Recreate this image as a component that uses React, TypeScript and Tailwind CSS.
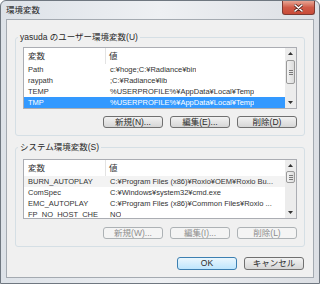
const FONT = "font-['Liberation_Sans','Noto_Sans_CJK_JP',sans-serif]";

type Row = { name: string; value: string; selected?: boolean; hover?: boolean };

const USER_VARS: Row[] = [
  { name: "Path", value: "c:¥hoge;C:¥Radiance¥bin" },
  { name: "raypath", value: ";C:¥Radiance¥lib" },
  { name: "TEMP", value: "%USERPROFILE%¥AppData¥Local¥Temp" },
  { name: "TMP", value: "%USERPROFILE%¥AppData¥Local¥Temp", selected: true },
];

const SYSTEM_VARS: Row[] = [
  { name: "BURN_AUTOPLAY", value: "C:¥Program Files (x86)¥Roxio¥OEM¥Roxio Bu...", hover: true },
  { name: "ComSpec", value: "C:¥Windows¥system32¥cmd.exe" },
  { name: "EMC_AUTOPLAY", value: "C:¥Program Files (x86)¥Common Files¥Roxio ..." },
  { name: "FP_NO_HOST_CHE", value: "NO" },
];

function Arrow({ down }: { down?: boolean }) {
  return (
    <svg width="5" height="3" viewBox="0 0 5 3">
      <path d={down ? "M0 0h5L2.5 3z" : "M0 3h5L2.5 0z"} fill="#333" />
    </svg>
  );
}

function ScrollBar({ thumbClass }: { thumbClass: string }) {
  return (
    <div className="flex w-[11px] flex-col bg-[#ececec]">
      <div className="flex h-[11px] items-center justify-center">
        <Arrow />
      </div>
      <div className="relative flex-1">
        <div
          className={`absolute left-[1px] right-[1px] flex flex-col items-center justify-center gap-[1px] rounded-[2px] border border-[#9a9a9a] bg-gradient-to-r from-[#f3f3f3] to-[#dcdcdc] ${thumbClass}`}
        >
          <div className="h-px w-[4px] bg-[#7a7a7a]" />
          <div className="h-px w-[4px] bg-[#7a7a7a]" />
          <div className="h-px w-[4px] bg-[#7a7a7a]" />
        </div>
      </div>
      <div className="flex h-[11px] items-center justify-center">
        <Arrow down />
      </div>
    </div>
  );
}

function VarList({ rows, heightClass, thumbClass }: { rows: Row[]; heightClass: string; thumbClass: string }) {
  return (
    <div className={`flex overflow-hidden border border-[#abadb3] bg-white ${heightClass}`}>
      <div className="flex min-w-0 flex-1 flex-col overflow-hidden">
        <div className="flex h-[16px] shrink-0 items-center text-[#333]">
          <div className="h-full w-[82px] shrink-0 border-r border-[#e3e3e3] pl-[4px] leading-[16px]">変数</div>
          <div className="pl-[3px]">値</div>
        </div>
        {rows.map((r) => (
          <div
            key={r.name}
            className={[
              "flex h-[11px] shrink-0 items-center whitespace-nowrap text-[7.5px] leading-[11px]",
              r.selected ? "bg-[#3399ff] text-white" : r.hover ? "bg-[#f3f3f3] text-[#333]" : "text-[#333]",
            ].join(" ")}
          >
            <div className="w-[82px] shrink-0 overflow-hidden pl-[4px]">{r.name}</div>
            <div className="overflow-hidden pl-[4px]">{r.value}</div>
          </div>
        ))}
      </div>
      <ScrollBar thumbClass={thumbClass} />
    </div>
  );
}

function Button({ label, disabled, primary, className }: { label: string; disabled?: boolean; primary?: boolean; className?: string }) {
  return (
    <div
      className={[
        "flex w-[60px] items-center justify-center rounded-[3px] border",
        primary
          ? "border-[#3c7fb1] bg-gradient-to-b from-[#eaf6fd] to-[#bee6fd] text-[#2a2a2a]"
          : disabled
            ? "border-[#adb2b5] bg-[#f4f4f4] text-[#8d8d8d]"
            : "border-[#707070] bg-gradient-to-b from-[#f2f2f2] to-[#d6d6d6] text-[#2a2a2a]",
        className ?? "h-[12px]",
      ].join(" ")}
    >
      {label}
    </div>
  );
}

function GroupBox({ label, children, className }: { label: string; children: React.ReactNode; className?: string }) {
  return (
    <fieldset className={`rounded-[3px] border border-[#d5dfe5] px-[7px] pb-[7px] ${className ?? ""}`}>
      <legend className="-ml-[5px] px-[2px] leading-[12px] text-[#2a2a2a]">{label}</legend>
      {children}
    </fieldset>
  );
}

export default function App() {
  return (
    <div className={`h-[284px] w-[320px] bg-white ${FONT} text-[8.5px]`}>
      <div className="flex h-full flex-col rounded-t-[6px] border border-[#6f7780] bg-gradient-to-r from-[#dde2e8] via-[#eef0f3] to-[#dcdfe4]">
        {/* title bar */}
        <div className="flex h-[18px] shrink-0 items-start justify-between">
          <span className="ml-[5px] mt-[2px] text-[8.5px] leading-[14px] text-[#1e1e1e]">環境変数</span>
          <div className="mr-[4px] flex h-[14px] w-[33px] items-center justify-center rounded-b-[3px] border border-t-0 border-[#7d3a32] bg-gradient-to-b from-[#e7a594] via-[#cf5b48] to-[#c94b38]">
            <svg width="9" height="8" viewBox="0 0 9 8">
              <path d="M1 1l7 6M8 1L1 7" stroke="#5a2820" strokeWidth="3" strokeLinecap="round" />
              <path d="M1 1l7 6M8 1L1 7" stroke="#fff" strokeWidth="1.6" strokeLinecap="round" />
            </svg>
          </div>
        </div>

        {/* client area */}
        <div className="mx-[5px] flex flex-1 flex-col border border-[#a4aab1] bg-[#f0f0f0] px-[8px]">
          <GroupBox label="yasuda のユーザー環境変数(U)" className="mt-[11px]">
            <div className="mt-[4px]">
              <VarList rows={USER_VARS} heightClass="h-[62px]" thumbClass="top-[1px] h-[24px]" />
            </div>
            <div className="mt-[7px] flex justify-end gap-[7px]">
              <Button label="新規(N)..." />
              <Button label="編集(E)..." />
              <Button label="削除(D)" />
            </div>
          </GroupBox>

          <GroupBox label="システム環境変数(S)" className="mt-[5px]">
            <div className="mt-[6px]">
              <VarList rows={SYSTEM_VARS} heightClass="h-[60px]" thumbClass="top-0 h-[12px]" />
            </div>
            <div className="mt-[8px] flex justify-end gap-[7px]">
              <Button label="新規(W)..." disabled />
              <Button label="編集(I)..." disabled />
              <Button label="削除(L)" disabled />
            </div>
          </GroupBox>

          <div className="mt-[10px] flex justify-end gap-[7px] pr-[1px]">
            <Button label="OK" primary className="h-[13px]" />
            <Button label="キャンセル" className="h-[13px]" />
          </div>
        </div>
        <div className="h-[5px] shrink-0" />
      </div>
    </div>
  );
}
